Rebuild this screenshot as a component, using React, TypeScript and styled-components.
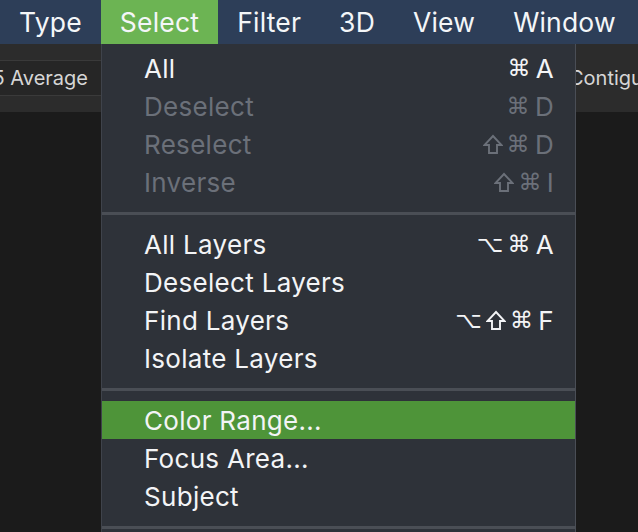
import React from "react";
import styled, { createGlobalStyle } from "styled-components";

const GlobalStyle = createGlobalStyle`
  html, body {
    margin: 0;
    padding: 0;
    background: #1b1b1b;
  }
  body {
    font-family: Inter, "Liberation Sans", sans-serif;
  }
`;

const Page = styled.div`
  width: 638px;
  height: 532px;
  overflow: hidden;
  display: flex;
  flex-direction: column;
  background: #1b1b1b;
`;

const MenuBar = styled.div`
  height: 44px;
  flex: none;
  display: flex;
  align-items: stretch;
  background: #2d3e58;
`;

const MenuTitle = styled.div<{ $active?: boolean }>`
  display: flex;
  align-items: center;
  padding: 0 19px 1px;
  font-size: 26.5px;
  letter-spacing: 0.2px;
  color: #f4f6f8;
  background: ${(p) => (p.$active ? "#6cb453" : "transparent")};
  white-space: nowrap;
`;

const Workspace = styled.div`
  position: relative;
  flex: 1;
  display: flex;
  flex-direction: column;
`;

const OptionsBar = styled.div`
  height: 68px;
  display: flex;
  align-items: center;
  background: #2c2c2c;
`;

const Field = styled.div`
  width: 101px;
  height: 36px;
  flex: none;
  display: flex;
  align-items: center;
  justify-content: flex-end;
  padding-right: 13px;
  box-sizing: border-box;
  background: #262626;
  border-top: 1px solid #3a3a3a;
  border-bottom: 1px solid #3a3a3a;
  font-size: 20px;
  color: #d6d6d6;
  white-space: nowrap;
`;

const OptionLabel = styled.div`
  margin-left: 468px;
  font-size: 20px;
  color: #d6d6d6;
  white-space: nowrap;
`;

const Canvas = styled.div`
  flex: 1;
  background: #1b1b1b;
`;

const Dropdown = styled.div`
  position: absolute;
  top: 0;
  left: 101px;
  width: 475px;
  box-sizing: border-box;
  padding-top: 5px;
  background: #2e3239;
  border-left: 1px solid #3f434b;
  border-right: 1px solid #4a4e56;
`;

const Item = styled.div<{ $disabled?: boolean; $highlight?: boolean }>`
  height: 38px;
  display: flex;
  align-items: center;
  justify-content: space-between;
  padding: 0 21px 0 42px;
  font-size: 26px;
  letter-spacing: 0.3px;
  color: ${(p) => (p.$disabled ? "#6b7079" : "#f3f4f6")};
  background: ${(p) => (p.$highlight ? "#4e9439" : "transparent")};
`;

const Shortcut = styled.span`
  display: flex;
  align-items: center;
  gap: 4px;
  font-family: "DejaVu Sans", sans-serif;
  font-size: 23px;
`;

const Key = styled.span`
  font-family: Inter, "Liberation Sans", sans-serif;
  font-size: 26px;
  margin-left: 1px;
`;

const Separator = styled.div`
  height: 24px;
  display: flex;
  align-items: center;

  &::after {
    content: "";
    display: block;
    width: 100%;
    height: 3px;
    background: #4a4e55;
  }
`;

const ShiftIcon = () => (
  <svg width="20" height="21" viewBox="0 0 20 21" fill="none">
    <path
      d="M10 2 L18.5 11 H14 V19 H6 V11 H1.5 Z"
      stroke="currentColor"
      strokeWidth="1.9"
      strokeLinejoin="miter"
    />
  </svg>
);

type Entry = {
  label: string;
  mods?: string;
  key?: string;
  disabled?: boolean;
  highlight?: boolean;
};

const groups: Entry[][] = [
  [
    { label: "All", mods: "⌘", key: "A" },
    { label: "Deselect", mods: "⌘", key: "D", disabled: true },
    { label: "Reselect", mods: "⇧⌘", key: "D", disabled: true },
    { label: "Inverse", mods: "⇧⌘", key: "I", disabled: true },
  ],
  [
    { label: "All Layers", mods: "⌥⌘", key: "A" },
    { label: "Deselect Layers" },
    { label: "Find Layers", mods: "⌥⇧⌘", key: "F" },
    { label: "Isolate Layers" },
  ],
  [
    { label: "Color Range...", highlight: true },
    { label: "Focus Area..." },
    { label: "Subject" },
  ],
];

const titles = ["Type", "Select", "Filter", "3D", "View", "Window"];

export default function App() {
  return (
    <Page>
      <GlobalStyle />
      <MenuBar>
        {titles.map((t) => (
          <MenuTitle key={t} $active={t === "Select"}>
            {t}
          </MenuTitle>
        ))}
      </MenuBar>
      <Workspace>
        <OptionsBar>
          <Field>5 Average</Field>
          <OptionLabel>Contiguous</OptionLabel>
        </OptionsBar>
        <Canvas />
        <Dropdown>
          {groups.map((group, gi) => (
            <React.Fragment key={gi}>
              {group.map((item) => (
                <Item
                  key={item.label}
                  $disabled={item.disabled}
                  $highlight={item.highlight}
                >
                  <span>{item.label}</span>
                  {item.key && (
                    <Shortcut>
                      {item.mods!.split("").map((m, i) =>
                        m === "⇧" ? (
                          <ShiftIcon key={i} />
                        ) : (
                          <span key={i}>{m}</span>
                        )
                      )}
                      <Key>{item.key}</Key>
                    </Shortcut>
                  )}
                </Item>
              ))}
              <Separator />
            </React.Fragment>
          ))}
        </Dropdown>
      </Workspace>
    </Page>
  );
}
